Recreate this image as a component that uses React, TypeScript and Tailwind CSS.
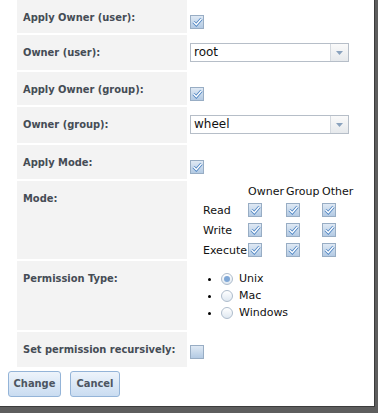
import React from "react";

const font = { fontFamily: "'DejaVu Sans', Verdana, sans-serif" };
const boldFont = { fontFamily: "'DejaVu Sans Condensed', 'DejaVu Sans', Tahoma, sans-serif" };

function Check({ checked = true }: { checked?: boolean }) {
  return (
    <span className="inline-flex h-[14px] w-[14px] items-center justify-center border border-[#98adc4] bg-gradient-to-b from-[#dfe9f4] to-[#b3cae3]">
      {checked && (
        <svg width="11" height="10" viewBox="0 0 11 10">
          <path d="M1.5 5 L4.3 7.8 L9.5 1.8" fill="none" stroke="#4a82c2" strokeWidth="3" />
          <path d="M1.5 5 L4.3 7.8 L9.5 1.8" fill="none" stroke="#ffffff" strokeWidth="1.4" />
        </svg>
      )}
    </span>
  );
}

function Radio({ selected = false }: { selected?: boolean }) {
  return (
    <span className="inline-flex h-[12px] w-[12px] items-center justify-center rounded-full border border-[#aebccc] bg-gradient-to-b from-[#ffffff] to-[#dfe8f1]">
      {selected && <span className="h-[6px] w-[6px] rounded-full bg-[#7fa7d6]" />}
    </span>
  );
}

function Select({ value }: { value: string }) {
  return (
    <div className="flex h-[19px] w-[159px] border border-[#b6bec8] bg-white">
      <span className="flex-1 pl-[3px] text-[12px] leading-[17px] text-[#111]">{value}</span>
      <span className="flex w-[18px] items-center justify-center border-l border-[#d4d9df] bg-gradient-to-b from-[#fafafa] to-[#e6e9ec]">
        <svg width="7" height="4" viewBox="0 0 7 4">
          <path d="M0 0 H7 L3.5 4 Z" fill="#8aa2bd" />
        </svg>
      </span>
    </div>
  );
}

function Row({ label, h, children }: { label: string; h: string; children?: React.ReactNode }) {
  return (
    <div className={`flex ${h}`}>
      <div
        className="w-[170px] shrink-0 whitespace-nowrap bg-[#f3f3f3] pl-[6px] pt-[11px] text-[11px] font-bold leading-[13px] text-[#454c55]"
        style={boldFont}
      >
        {label}
      </div>
      <div className="flex-1 pl-[3px]">{children}</div>
    </div>
  );
}

export default function App() {
  return (
    <div className="h-[413px] w-[378px] bg-[#5e5e5e]" style={font}>
      <div className="h-[407px] w-[375px] border-b border-r border-[#3c3c3c] bg-white">
        <div className="flex flex-col gap-[2px] pl-[17px]">
          <Row label="Apply Owner (user):" h="h-[33px]">
            <div className="pt-[10px]"><Check /></div>
          </Row>
          <Row label="Owner (user):" h="h-[35px]">
            <div className="pt-[8px]"><Select value="root" /></div>
          </Row>
          <Row label="Apply Owner (group):" h="h-[33px]">
            <div className="pt-[10px]"><Check /></div>
          </Row>
          <Row label="Owner (group):" h="h-[36px]">
            <div className="pt-[8px]"><Select value="wheel" /></div>
          </Row>
          <Row label="Apply Mode:" h="h-[34px]">
            <div className="pt-[10px]"><Check /></div>
          </Row>
          <Row label="Mode:" h="h-[78px]">
            <div className="pl-[13px] pt-[4px] text-[11px] leading-[13px] text-[#111]">
              <div className="flex">
                <span className="w-[45px]" />
                <span className="w-[38px]">Owner</span>
                <span className="w-[36px]">Group</span>
                <span>Other</span>
              </div>
              {["Read", "Write", "Execute"].map((r) => (
                <div key={r} className="mt-[5px] flex items-center first:mt-[4px]">
                  <span className="w-[45px]">{r}</span>
                  <span className="w-[38px]"><Check /></span>
                  <span className="w-[36px]"><Check /></span>
                  <span><Check /></span>
                </div>
              ))}
            </div>
          </Row>
          <Row label="Permission Type:" h="h-[69px]">
            <ul className="flex flex-col gap-[3px] pl-[18px] pt-[11px] text-[11px] leading-[14px] text-[#111]">
              {["Unix", "Mac", "Windows"].map((t, i) => (
                <li key={t} className="flex items-center">
                  <span className="mr-[10px] h-[3px] w-[3px] rounded-full bg-black" />
                  <Radio selected={i === 0} />
                  <span className="ml-[6px]">{t}</span>
                </li>
              ))}
            </ul>
          </Row>
          <Row label="Set permission recursively:" h="h-[35px]">
            <div className="pt-[10px]"><Check checked={false} /></div>
          </Row>
        </div>
        <div className="mt-[4px] flex gap-[9px] pl-[8px]" style={boldFont}>
          <button className="h-[26px] w-[53px] rounded-[3px] border border-[#94b4d8] bg-gradient-to-b from-[#eef4fb] to-[#c9dcf1] text-[11px] font-bold text-[#4c5561]">
            Change
          </button>
          <button className="h-[26px] w-[50px] rounded-[3px] border border-[#94b4d8] bg-gradient-to-b from-[#eef4fb] to-[#c9dcf1] text-[11px] font-bold text-[#4c5561]">
            Cancel
          </button>
        </div>
      </div>
    </div>
  );
}
